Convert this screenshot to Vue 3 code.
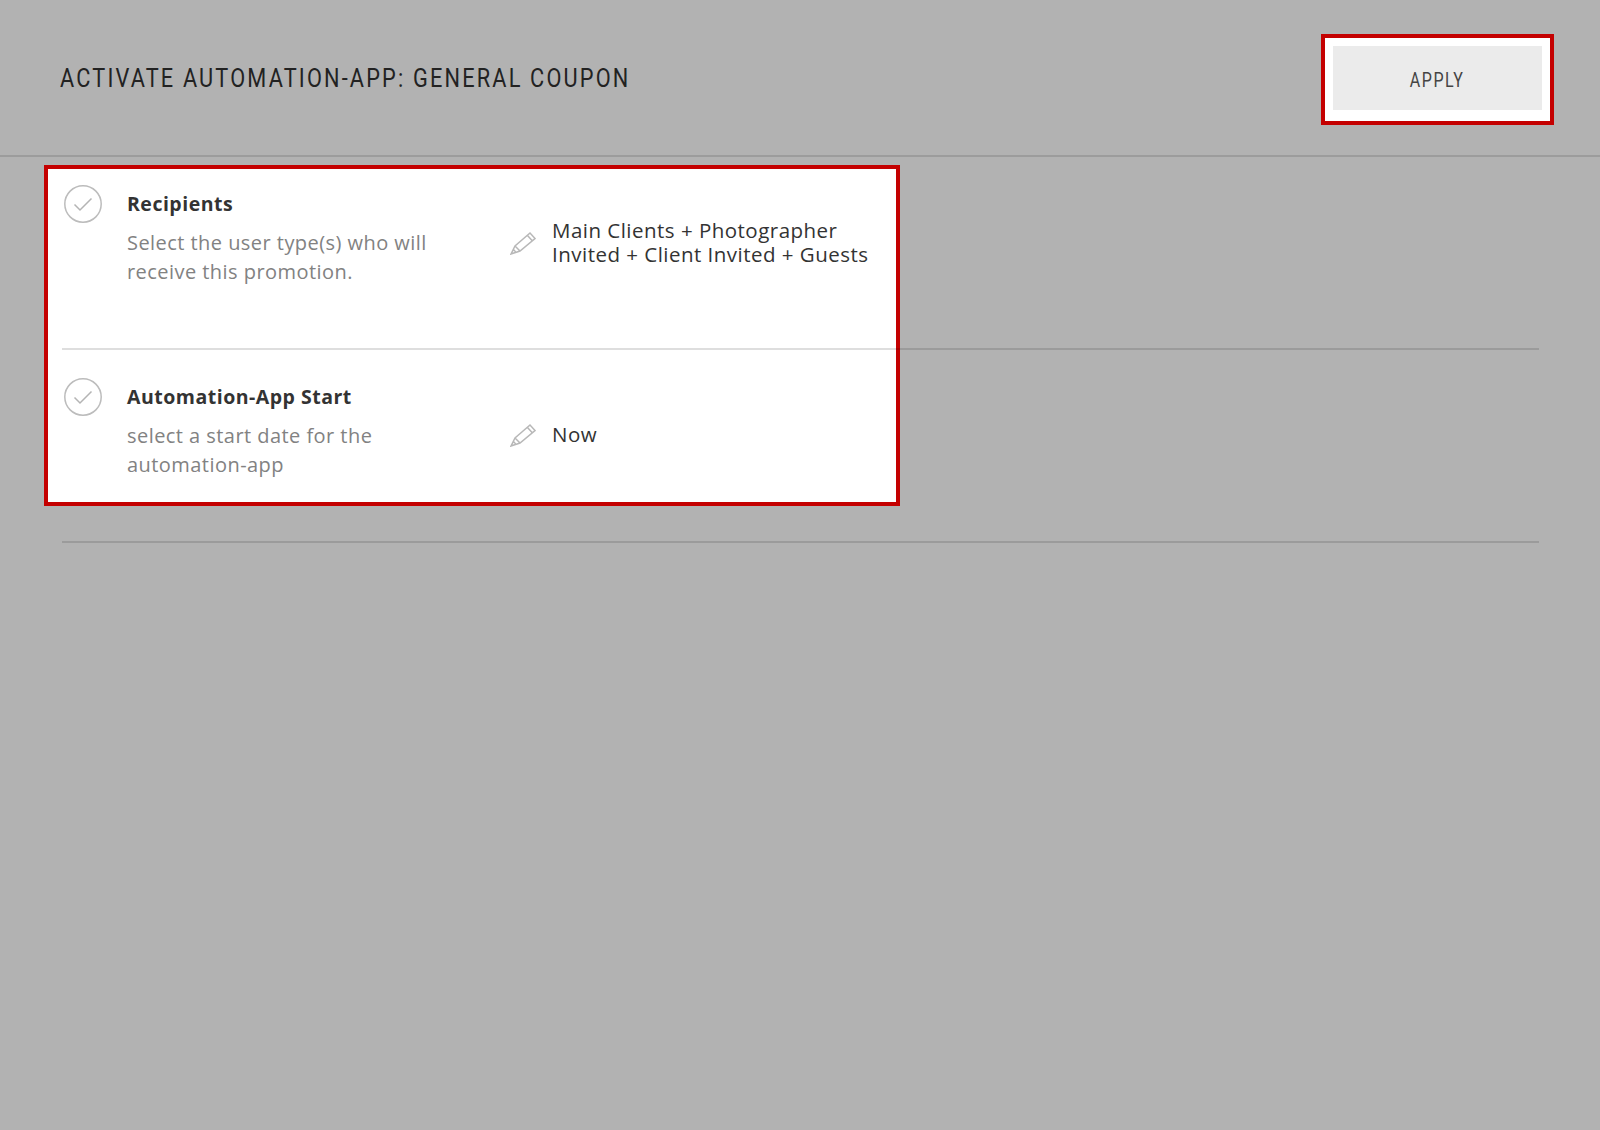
<script setup>
const rows = [
  { title: 'Recipients', desc: ['Select the user type(s) who will', 'receive this promotion.'], value: ['Main Clients + Photographer', 'Invited + Client Invited + Guests'] },
  { title: 'Automation-App Start', desc: ['select a start date for the', 'automation-app'], value: ['Now'] },
]
</script>

<template>
  <div class="page">
    <header class="header">
      <h1 class="heading">ACTIVATE AUTOMATION-APP: GENERAL COUPON</h1>
      <div class="apply-spot">
        <button class="apply"><span class="apply-label">APPLY</span></button>
      </div>
    </header>
    <section class="rows">
      <div class="spot"></div>
      <div v-for="row in rows" :key="row.title" class="row">
        <svg class="check" viewBox="0 0 38 38" width="38" height="38">
          <circle cx="19" cy="19" r="18.2" fill="none" stroke="#bcbcbc" stroke-width="1.5" />
          <path d="M10.5 19.5 L16 25 L27.5 13.5" fill="none" stroke="#b4b4b4" stroke-width="1.5" />
        </svg>
        <div class="copy">
          <div class="title">{{ row.title }}</div>
          <p class="desc"><span v-for="l in row.desc" :key="l">{{ l }}</span></p>
        </div>
        <div class="value-wrap">
          <svg class="pencil" viewBox="0 0 26 24" width="26" height="24">
            <path d="M1 23 L5 15 L20 2 L25 7.5 L10 20 Z M5 15 L10 20 M17.5 4.5 L22.5 10 M1 23 L3.5 18.5 L6 21.3 Z" fill="none" stroke="#b8b8b8" stroke-width="1.5" stroke-linejoin="miter" />
          </svg>
          <div class="value"><span v-for="l in row.value" :key="l">{{ l }}</span></div>
        </div>
      </div>
    </section>
  </div>
</template>

<style>
html, body { margin: 0; background: #b2b2b2; }
</style>

<style scoped>
.page {
  width: 1600px;
  height: 1130px;
  background: #b2b2b2;
  font-family: "Open Sans", "Noto Sans", sans-serif;
  overflow: hidden;
}
.header {
  box-sizing: border-box;
  height: 157px;
  padding: 34px 46px 0 60px;
  border-bottom: 2px solid #9c9c9c;
  display: flex;
  justify-content: space-between;
  align-items: flex-start;
}
.heading {
  margin: 29px 0 0;
  font-family: "Roboto", sans-serif;
  font-weight: 400;
  font-size: 26px;
  line-height: 30px;
  letter-spacing: 2.6px;
  color: #222;
  white-space: nowrap;
  transform: scaleX(0.836);
  transform-origin: left center;
  width: 570px;
}
.apply-spot {
  background: #fff;
  border: 4px solid #c40000;
  padding: 8px 8px 11px;
}
.apply {
  display: block;
  width: 209px;
  height: 64px;
  padding: 4px 0 0;
  border: 0;
  background: #ebebeb;
  color: #444;
  font-family: "Roboto", sans-serif;
  font-size: 20px;
  font-weight: 400;
  letter-spacing: 1.9px;
}
.apply-label {
  display: inline-block;
  transform: scaleX(0.8);
}
.rows {
  position: relative;
}
.spot {
  position: absolute;
  left: 44px;
  top: 8px;
  width: 856px;
  height: 341px;
  box-sizing: border-box;
  background: #fff;
  border: 4.5px solid #c40000;
}
.row {
  position: relative;
  box-sizing: border-box;
  margin: 0 61px 0 62px;
  height: 193px;
  padding: 28px 0 0 2px;
  border-bottom: 2px solid rgba(0, 0, 0, 0.13);
  display: flex;
}
.check { flex: none; margin-right: 25px; }
.copy { width: 383px; flex: none; }
.title {
  font-weight: 700;
  font-size: 19.5px;
  line-height: 38px;
  letter-spacing: 0.5px;
  color: #333;
}
.desc {
  margin: 5px 0 0;
  font-size: 20px;
  line-height: 29px;
  letter-spacing: 0.45px;
  color: #828282;
}
.desc span, .value span { display: block; }
.value-wrap {
  display: flex;
  align-items: center;
  height: 48px;
  margin-top: 33px;
}
.row:last-of-type .value-wrap { margin-top: 32px; }
.pencil { flex: none; margin-right: 16px; margin-top: 2px; }
.value {
  font-size: 20.5px;
  line-height: 24px;
  letter-spacing: 0.48px;
  color: #333;
  white-space: nowrap;
}
</style>
